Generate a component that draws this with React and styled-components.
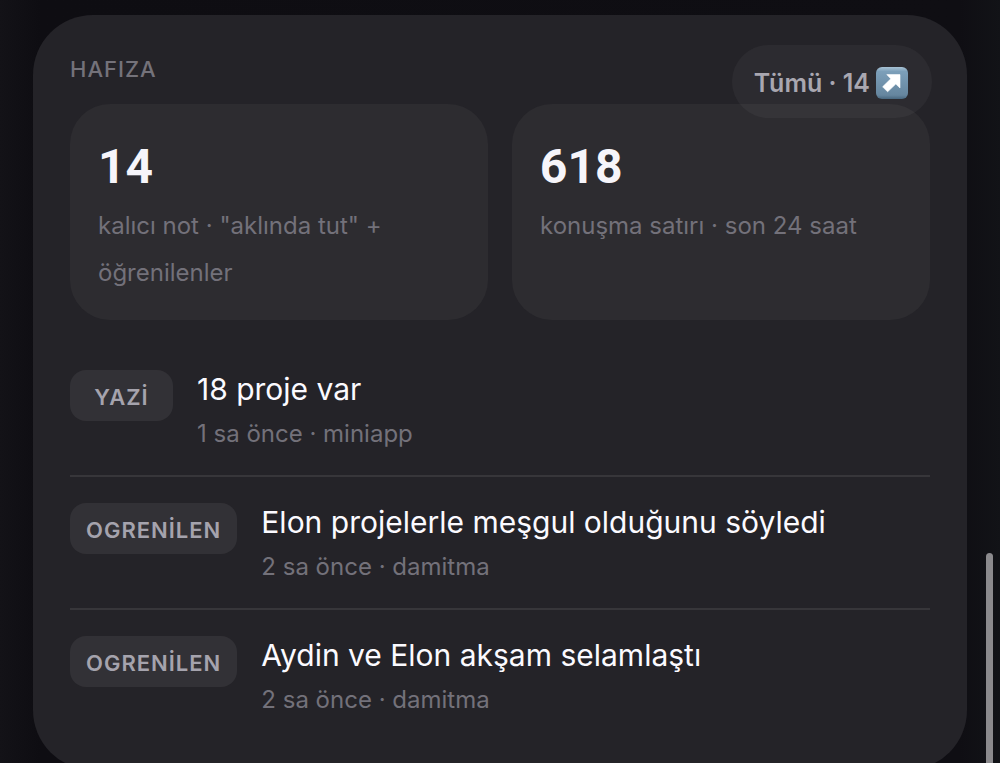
import React from "react";
import styled, { createGlobalStyle } from "styled-components";

const GlobalStyle = createGlobalStyle`
  *, *::before, *::after { box-sizing: border-box; }
  body {
    margin: 0;
    min-height: 100vh;
    overflow: hidden;
    background: linear-gradient(90deg, #131217 0%, #0e0d12 4%, #0f0e13 96%, #121317 100%);
    font-family: Inter, "Noto Sans", sans-serif;
    color: #f6f5fa;
  }
  h2, p, ul { margin: 0; padding: 0; }
`;

const Page = styled.main`
  padding: 15px 33px 0;
`;

const Panel = styled.section`
  position: relative;
  padding: 36px 37px 29px;
  border-radius: 60px;
  background: #242328;
`;

const PanelTitle = styled.h2`
  margin-bottom: 17px;
  font-size: 22px;
  line-height: 36px;
  font-weight: 500;
  letter-spacing: 1px;
  color: #74727a;
`;

const AllButton = styled.button`
  position: absolute;
  top: 30px;
  right: 35px;
  display: flex;
  align-items: center;
  gap: 6px;
  height: 73px;
  padding: 2px 24px 0 22px;
  border: 0;
  border-radius: 37px;
  background: rgba(255, 255, 255, 0.04);
  color: #a9a7b0;
  font-family: inherit;
  font-size: 25px;
  font-weight: 600;
  white-space: nowrap;
  cursor: pointer;
`;

const Stats = styled.div`
  display: grid;
  grid-template-columns: 1fr 1fr;
  gap: 24px;
  margin-bottom: 24px;
`;

const StatCard = styled.div`
  padding: 28px 28px 24px;
  border-radius: 40px;
  background: #2d2c30;
`;

const StatValue = styled.p`
  font-family: Roboto, Inter, sans-serif;
  font-size: 48px;
  line-height: 70px;
  font-weight: 700;
  font-variant-numeric: tabular-nums;
`;

const StatLabel = styled.p`
  font-size: 24px;
  line-height: 47px;
  color: #73717a;
`;

const List = styled.ul`
  list-style: none;
`;

const Entry = styled.li`
  display: flex;
  align-items: flex-start;
  gap: 24px;
  padding: 26px 0 23px;

  & + & { border-top: 2px solid #37363a; }
`;

const Tag = styled.span`
  flex: none;
  min-width: 103px;
  padding: 3px 16px 0;
  border-radius: 16px;
  background: #323136;
  color: #a5a3ad;
  font-size: 22px;
  line-height: 48px;
  font-weight: 600;
  letter-spacing: 1px;
  text-align: center;
`;

const EntryBody = styled.div`
  min-width: 0;
`;

const EntryTitle = styled.p`
  font-size: 30px;
  line-height: 38px;
  color: #fbfaff;
`;

const EntryMeta = styled.p`
  margin-top: 8px;
  font-size: 24px;
  line-height: 36px;
  color: #73717a;
`;

const ScrollThumb = styled.div`
  position: fixed;
  top: 553px;
  right: 7px;
  bottom: -8px;
  width: 7px;
  border-radius: 4px;
  background: #8b8a8d;
`;

const stats = [
  { value: "14", label: 'kalıcı not · "aklında tut" + öğrenilenler' },
  { value: "618", label: "konuşma satırı · son 24 saat" },
];

const entries = [
  { tag: "YAZİ", title: "18 proje var", meta: "1 sa önce · miniapp" },
  { tag: "OGRENİLEN", title: "Elon projelerle meşgul olduğunu söyledi", meta: "2 sa önce · damitma" },
  { tag: "OGRENİLEN", title: "Aydin ve Elon akşam selamlaştı", meta: "2 sa önce · damitma" },
];

function ArrowIcon() {
  return (
    <svg width="32" height="32" viewBox="0 0 32 32" aria-hidden="true">
      <defs>
        <linearGradient id="tile" x1="0" y1="0" x2="0" y2="1">
          <stop offset="0" stopColor="#a9c3d5" />
          <stop offset="0.14" stopColor="#7c9fb9" />
          <stop offset="0.88" stopColor="#66869f" />
          <stop offset="1" stopColor="#48677f" />
        </linearGradient>
      </defs>
      <rect width="32" height="32" rx="6" fill="url(#tile)" />
      <path
        d="M10.8 7.6H24V21L19.8 17L11.6 24.8L6.6 19.8L14.8 11.8Z"
        fill="#fff"
        stroke="#fff"
        strokeWidth="0.6"
        strokeLinejoin="round"
      />
    </svg>
  );
}

export default function App() {
  return (
    <>
      <GlobalStyle />
      <Page lang="tr">
        <Panel>
          <PanelTitle>HAFIZA</PanelTitle>
          <Stats>
            {stats.map((s) => (
              <StatCard key={s.value}>
                <StatValue>{s.value}</StatValue>
                <StatLabel>{s.label}</StatLabel>
              </StatCard>
            ))}
          </Stats>
          <List>
            {entries.map((e) => (
              <Entry key={e.title}>
                <Tag>{e.tag}</Tag>
                <EntryBody>
                  <EntryTitle>{e.title}</EntryTitle>
                  <EntryMeta>{e.meta}</EntryMeta>
                </EntryBody>
              </Entry>
            ))}
          </List>
          <AllButton type="button">
            Tümü · 14
            <ArrowIcon />
          </AllButton>
        </Panel>
      </Page>
      <ScrollThumb aria-hidden="true" />
    </>
  );
}
